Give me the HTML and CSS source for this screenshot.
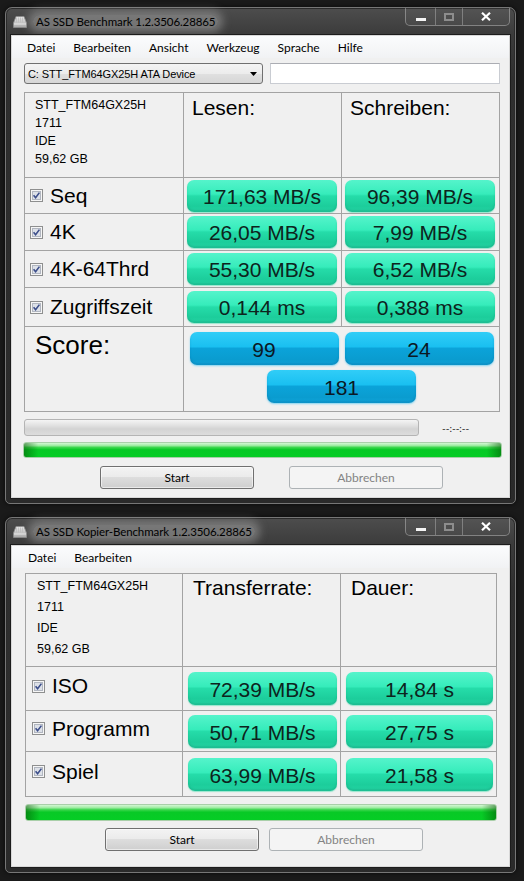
FILE: index.html
```html
<!DOCTYPE html>
<html lang="de">
<head>
<meta charset="utf-8">
<title>AS SSD Benchmark</title>
<link rel="stylesheet" href="styles.css">
</head>
<body>
<div class="win win-main">
  <div class="titlebar">
    <div class="title">
      <svg class="app-icon" width="14" height="12" viewBox="0 0 14 12"><defs><linearGradient id="ig1" x1="0" y1="0" x2="0" y2="1"><stop offset="0" stop-color="#e8e8e8"/><stop offset="1" stop-color="#a9a9a9"/></linearGradient></defs><path d="M3 0.5 H11 L13.5 7 V11.5 H0.5 V7 Z" fill="url(#ig1)" stroke="#8a8a8a" stroke-width="0.8"/><path d="M3.5 1.5 V6.5 M5.5 1.5 V6.5 M7.5 1.5 V6.5 M9.5 1.5 V6.5" stroke="#bdbdbd" stroke-width="0.8"/><path d="M1 8 H13" stroke="#f5f5f5" stroke-width="0.8"/></svg>
      <span class="title-text">AS SSD Benchmark 1.2.3506.28865</span>
    </div>
    <div class="caption-btns">
      <span class="cb cb-min"><i class="min-bar"></i></span>
      <span class="cb cb-max"><i class="max-box"></i></span>
      <span class="cb cb-close"><svg width="10" height="9" viewBox="0 0 10 9"><path d="M1 0.8 L9 8.2 M9 0.8 L1 8.2" stroke="#fff" stroke-width="2.2"/></svg></span>
    </div>
  </div>
  <div class="client client-main">
    <div class="menubar">
      <span>Datei</span><span>Bearbeiten</span><span>Ansicht</span><span>Werkzeug</span><span>Sprache</span><span>Hilfe</span>
    </div>
    <div class="drive-row">
      <div class="combo"><span class="combo-text">C: STT_FTM64GX25H ATA Device</span><svg width="7" height="4" viewBox="0 0 7 4"><path d="M0 0 H7 L3.5 4 Z" fill="#000"/></svg></div>
      <div class="textbox"></div>
    </div>
    <div class="grid grid-main">
      <div class="cell info">STT_FTM64GX25H<br>1711<br>IDE<br>59,62 GB</div>
      <div class="cell head">Lesen:</div>
      <div class="cell head">Schreiben:</div>

      <div class="cell label"><svg class="chk" width="13" height="13" viewBox="0 0 13 13"><rect x="0.5" y="0.5" width="12" height="12" fill="#f6f6f6" stroke="#8e8f8f"/><rect x="2.5" y="2.5" width="8" height="8" fill="#dde1e8" stroke="#b1b6c0"/><path d="M3.6 6.3 L5.6 8.8 L9.4 3.6" fill="none" stroke="#3c4e8a" stroke-width="1.6"/></svg>Seq</div>
      <div class="cell val"><div class="pill green">171,63 MB/s</div></div>
      <div class="cell val"><div class="pill green">96,39 MB/s</div></div>

      <div class="cell label"><svg class="chk" width="13" height="13" viewBox="0 0 13 13"><rect x="0.5" y="0.5" width="12" height="12" fill="#f6f6f6" stroke="#8e8f8f"/><rect x="2.5" y="2.5" width="8" height="8" fill="#dde1e8" stroke="#b1b6c0"/><path d="M3.6 6.3 L5.6 8.8 L9.4 3.6" fill="none" stroke="#3c4e8a" stroke-width="1.6"/></svg>4K</div>
      <div class="cell val"><div class="pill green">26,05 MB/s</div></div>
      <div class="cell val"><div class="pill green">7,99 MB/s</div></div>

      <div class="cell label"><svg class="chk" width="13" height="13" viewBox="0 0 13 13"><rect x="0.5" y="0.5" width="12" height="12" fill="#f6f6f6" stroke="#8e8f8f"/><rect x="2.5" y="2.5" width="8" height="8" fill="#dde1e8" stroke="#b1b6c0"/><path d="M3.6 6.3 L5.6 8.8 L9.4 3.6" fill="none" stroke="#3c4e8a" stroke-width="1.6"/></svg>4K-64Thrd</div>
      <div class="cell val"><div class="pill green">55,30 MB/s</div></div>
      <div class="cell val"><div class="pill green">6,52 MB/s</div></div>

      <div class="cell label"><svg class="chk" width="13" height="13" viewBox="0 0 13 13"><rect x="0.5" y="0.5" width="12" height="12" fill="#f6f6f6" stroke="#8e8f8f"/><rect x="2.5" y="2.5" width="8" height="8" fill="#dde1e8" stroke="#b1b6c0"/><path d="M3.6 6.3 L5.6 8.8 L9.4 3.6" fill="none" stroke="#3c4e8a" stroke-width="1.6"/></svg>Zugriffszeit</div>
      <div class="cell val"><div class="pill green">0,144 ms</div></div>
      <div class="cell val"><div class="pill green">0,388 ms</div></div>

      <div class="cell score-label">Score:</div>
      <div class="cell score">
        <div class="pill blue">99</div>
        <div class="pill blue">24</div>
        <div class="pill blue total">181</div>
      </div>
    </div>
    <div class="progress-row">
      <div class="bar-empty"></div>
      <span class="eta">--:--:--</span>
    </div>
    <div class="bar-green bar-green-main"></div>
    <div class="btn-row btn-row-main">
      <button class="btn">Start</button>
      <button class="btn" disabled>Abbrechen</button>
    </div>
  </div>
</div>

<div class="win win-copy">
  <div class="titlebar">
    <div class="title">
      <svg class="app-icon" width="14" height="12" viewBox="0 0 14 12"><defs><linearGradient id="ig2" x1="0" y1="0" x2="0" y2="1"><stop offset="0" stop-color="#e8e8e8"/><stop offset="1" stop-color="#a9a9a9"/></linearGradient></defs><path d="M3 0.5 H11 L13.5 7 V11.5 H0.5 V7 Z" fill="url(#ig2)" stroke="#8a8a8a" stroke-width="0.8"/><path d="M3.5 1.5 V6.5 M5.5 1.5 V6.5 M7.5 1.5 V6.5 M9.5 1.5 V6.5" stroke="#bdbdbd" stroke-width="0.8"/><path d="M1 8 H13" stroke="#f5f5f5" stroke-width="0.8"/></svg>
      <span class="title-text">AS SSD Kopier-Benchmark 1.2.3506.28865</span>
    </div>
    <div class="caption-btns">
      <span class="cb cb-min"><i class="min-bar"></i></span>
      <span class="cb cb-max"><i class="max-box"></i></span>
      <span class="cb cb-close"><svg width="10" height="9" viewBox="0 0 10 9"><path d="M1 0.8 L9 8.2 M9 0.8 L1 8.2" stroke="#fff" stroke-width="2.2"/></svg></span>
    </div>
  </div>
  <div class="client client-copy">
    <div class="menubar">
      <span>Datei</span><span>Bearbeiten</span>
    </div>
    <div class="grid grid-copy">
      <div class="cell info">STT_FTM64GX25H<br>1711<br>IDE<br>59,62 GB</div>
      <div class="cell head">Transferrate:</div>
      <div class="cell head">Dauer:</div>

      <div class="cell label"><svg class="chk" width="13" height="13" viewBox="0 0 13 13"><rect x="0.5" y="0.5" width="12" height="12" fill="#f6f6f6" stroke="#8e8f8f"/><rect x="2.5" y="2.5" width="8" height="8" fill="#dde1e8" stroke="#b1b6c0"/><path d="M3.6 6.3 L5.6 8.8 L9.4 3.6" fill="none" stroke="#3c4e8a" stroke-width="1.6"/></svg>ISO</div>
      <div class="cell val"><div class="pill green">72,39 MB/s</div></div>
      <div class="cell val"><div class="pill green">14,84 s</div></div>

      <div class="cell label"><svg class="chk" width="13" height="13" viewBox="0 0 13 13"><rect x="0.5" y="0.5" width="12" height="12" fill="#f6f6f6" stroke="#8e8f8f"/><rect x="2.5" y="2.5" width="8" height="8" fill="#dde1e8" stroke="#b1b6c0"/><path d="M3.6 6.3 L5.6 8.8 L9.4 3.6" fill="none" stroke="#3c4e8a" stroke-width="1.6"/></svg>Programm</div>
      <div class="cell val"><div class="pill green">50,71 MB/s</div></div>
      <div class="cell val"><div class="pill green">27,75 s</div></div>

      <div class="cell label"><svg class="chk" width="13" height="13" viewBox="0 0 13 13"><rect x="0.5" y="0.5" width="12" height="12" fill="#f6f6f6" stroke="#8e8f8f"/><rect x="2.5" y="2.5" width="8" height="8" fill="#dde1e8" stroke="#b1b6c0"/><path d="M3.6 6.3 L5.6 8.8 L9.4 3.6" fill="none" stroke="#3c4e8a" stroke-width="1.6"/></svg>Spiel</div>
      <div class="cell val"><div class="pill green">63,99 MB/s</div></div>
      <div class="cell val"><div class="pill green">21,58 s</div></div>
    </div>
    <div class="bar-green bar-green-copy"></div>
    <div class="btn-row btn-row-copy">
      <button class="btn">Start</button>
      <button class="btn" disabled>Abbrechen</button>
    </div>
  </div>
</div>
</body>
</html>
```

FILE: styles.css
```css
* { box-sizing: border-box; }
html, body { margin: 0; padding: 0; }
body {
  width: 524px;
  height: 881px;
  overflow: hidden;
  background: #1a1a1a;
  font-family: "Segoe UI", Lato, "Noto Sans", sans-serif;
  font-size: 12px;
  color: #000;
}

/* ---------- window frame ---------- */
.win {
  width: 511px;
  margin-left: 5px;
  padding: 0 5px 5px 5px;
  border: 1px solid #767676;
  border-radius: 7px 7px 5px 5px;
  background: linear-gradient(to bottom, #4d4d4d 0, #3b3b3b 27px, #2f2f2f 70px, #2a2a2a 100%);
  box-shadow: inset 0 0 0 1px #2a2a2a, 0 0 5px rgba(0,0,0,.7);
  display: flex;
  flex-direction: column;
}
.win-main { margin-top: 7px; height: 497px; }
.win-copy { margin-top: 13px; height: 356px; }

.titlebar {
  height: 27px;
  display: flex;
  justify-content: space-between;
  align-items: flex-start;
  flex: none;
}
.title {
  height: 27px;
  display: flex;
  align-items: center;
  padding-left: 2px;
  gap: 6px;
}
.app-icon { flex: none; }
.title-text {
  font-size: 11.5px;
  letter-spacing: -0.1px;
  color: #000;
  padding: 0 3px;
  border-radius: 8px;
  background: rgba(185,185,185,.42);
  box-shadow: 0 0 8px 5px rgba(185,185,185,.42);
}

.caption-btns {
  display: flex;
  height: 18px;
  border: 1px solid rgba(255,255,255,.32);
  border-top: none;
  border-radius: 0 0 5px 5px;
  background: rgba(255,255,255,.04);
}
.cb {
  display: flex;
  align-items: center;
  justify-content: center;
  border-left: 1px solid rgba(255,255,255,.28);
}
.cb-min { width: 29px; border-left: none; }
.cb-max { width: 27px; }
.cb-close { width: 47px; }
.min-bar {
  display: block;
  width: 10px;
  height: 3px;
  margin-top: 5px;
  background: #f4f4f4;
}
.max-box {
  display: block;
  width: 10px;
  height: 8px;
  border: 2px solid #8d8d8d;
}

/* ---------- client area ---------- */
.client {
  background: #f0f0f0;
  border: 1px solid #d8d8d8;
  box-shadow: 0 0 0 1px #1c1c1c;
  display: flex;
  flex-direction: column;
  flex: none;
}
.client-main { height: 463px; }
.client-copy { height: 322px; }

.menubar {
  height: 22px;
  display: flex;
  align-items: center;
  gap: 18px;
  padding-left: 15px;
  background: linear-gradient(#fbfcfd, #f1f2f4);
  flex: none;
}
.client-copy .menubar { padding-left: 16px; }

.drive-row {
  display: flex;
  gap: 7px;
  margin-top: 5px;
  padding: 0 9px 0 12px;
  height: 21px;
}
.combo {
  width: 239px;
  height: 21px;
  border: 1px solid #707070;
  border-radius: 3px;
  background: linear-gradient(#f4f4f4 0, #ececec 50%, #e0e0e0 51%, #d6d6d6 100%);
  display: flex;
  align-items: center;
  justify-content: space-between;
  padding: 0 5px 0 3px;
}
.combo-text {
  font-family: "Liberation Sans", Arial, sans-serif;
  font-size: 11px;
  letter-spacing: -0.1px;
}
.textbox {
  flex: 1;
  height: 21px;
  background: #fff;
  border: 1px solid #c9ccd2;
  border-top-color: #abadb3;
}

/* ---------- result grids ---------- */
.grid {
  display: grid;
  gap: 1px;
  background: #a3a3a3;
  border: 1px solid #a3a3a3;
  font-family: "Liberation Sans", Arial, sans-serif;
  flex: none;
}
.grid-main {
  margin: 8px 9px 0 12px;
  grid-template-columns: 158px 157px 157px;
  grid-template-rows: 84px 35px 36px 36px 38px 84px;
}
.grid-copy {
  margin: 5px 12px 0 13px;
  grid-template-columns: 156px 157px 155px;
  grid-template-rows: 92px 43px 40px 44px;
}
.cell { background: #f0f0f0; }

.info {
  font-size: 12.5px;
  line-height: 18px;
  padding: 3px 10px;
}
.grid-copy .info { line-height: 21px; padding: 2px 11px; }

.head {
  font-size: 21px;
  padding: 3px 8px;
}
.grid-copy .head { padding: 2px 10px; }

.label {
  display: flex;
  align-items: center;
  gap: 7px;
  padding-left: 5px;
  font-size: 21px;
}
.grid-copy .label { padding-left: 6px; padding-bottom: 5px; }
.chk { flex: none; }

.val {
  display: flex;
  align-items: center;
  padding: 0 4px 0 3px;
}
.grid-copy .val { padding: 0 3px 0 5px; }

.pill {
  flex: 1;
  height: 32px;
  display: flex;
  align-items: center;
  justify-content: center;
  padding-top: 2px;
  border-radius: 7px;
  font-family: "Liberation Sans", Arial, sans-serif;
  font-size: 21px;
}
.grid-copy .pill { height: 33px; padding-top: 3px; }
.green {
  color: #0d241d;
  background: linear-gradient(to bottom, #55f4cb 0%, #36ecbb 44%, #25dca9 50%, #1ccd9b 82%, #26d6a6 100%);
  box-shadow: inset 0 -2px 2px rgba(0,110,80,.22), 0 1px 1px rgba(60,220,170,.5);
}
.blue {
  color: #0b1824;
  background: linear-gradient(to bottom, #31cdf7 0%, #1ac0f1 44%, #0ba3d9 50%, #0a9ccf 84%, #12a9df 100%);
  box-shadow: inset 0 -2px 2px rgba(0,70,120,.22), 0 1px 2px rgba(40,190,240,.55);
}

.score-label {
  font-size: 26px;
  padding: 3px 10px;
}
.score {
  grid-column: 2 / 4;
  display: grid;
  grid-template-columns: 149px 149px;
  column-gap: 6px;
  row-gap: 5px;
  align-content: start;
  justify-content: center;
  padding-top: 5px;
}
.score .pill { height: 33px; flex: none; }
.score .total {
  grid-column: 1 / 3;
  justify-self: center;
  width: 149px;
}

/* ---------- progress and buttons ---------- */
.progress-row {
  display: flex;
  align-items: center;
  margin-top: 7px;
  padding-left: 12px;
  height: 17px;
}
.bar-empty {
  width: 395px;
  height: 17px;
  border: 1px solid #b4b4b4;
  border-radius: 3px;
  background: linear-gradient(#f4f4f4 0, #e2e2e2 35%, #d3d3d3 60%, #dcdcdc 100%);
}
.eta {
  margin-left: 23px;
  font-size: 10px;
  color: #222;
}

.bar-green {
  height: 17px;
  border: 1px solid #a9cfa9;
  border-radius: 3px;
  background:
    linear-gradient(to right, rgba(0,80,0,.5), rgba(0,80,0,0) 3%, rgba(0,80,0,0) 97%, rgba(0,80,0,.5)),
    linear-gradient(to bottom, #d4f7d4 0, #9eeca2 18%, #3ad64c 32%, #08c926 48%, #05cd25 100%);
  flex: none;
}
.bar-green-main { margin: 6px 7px 0 11px; height: 16px; }
.bar-green-copy { margin: 7px 12px 0 13px; }

.btn-row { display: flex; flex: none; }
.btn-row-main { margin-top: 8px; padding-left: 88px; gap: 35px; }
.btn-row-copy { margin-top: 7px; padding-left: 93px; gap: 10px; }

.btn {
  width: 154px;
  height: 23px;
  padding: 0;
  border: 1px solid #707070;
  border-radius: 3px;
  background: linear-gradient(#f3f3f3 0, #ebebeb 48%, #dddddd 50%, #cfcfcf 100%);
  box-shadow: inset 0 0 0 1px rgba(255,255,255,.55);
  font-family: "Segoe UI", Lato, "Noto Sans", sans-serif;
  font-size: 12px;
  color: #000;
}
.btn:disabled {
  border-color: #adb2b5;
  background: #f4f4f4;
  box-shadow: none;
  color: #838383;
}
```
